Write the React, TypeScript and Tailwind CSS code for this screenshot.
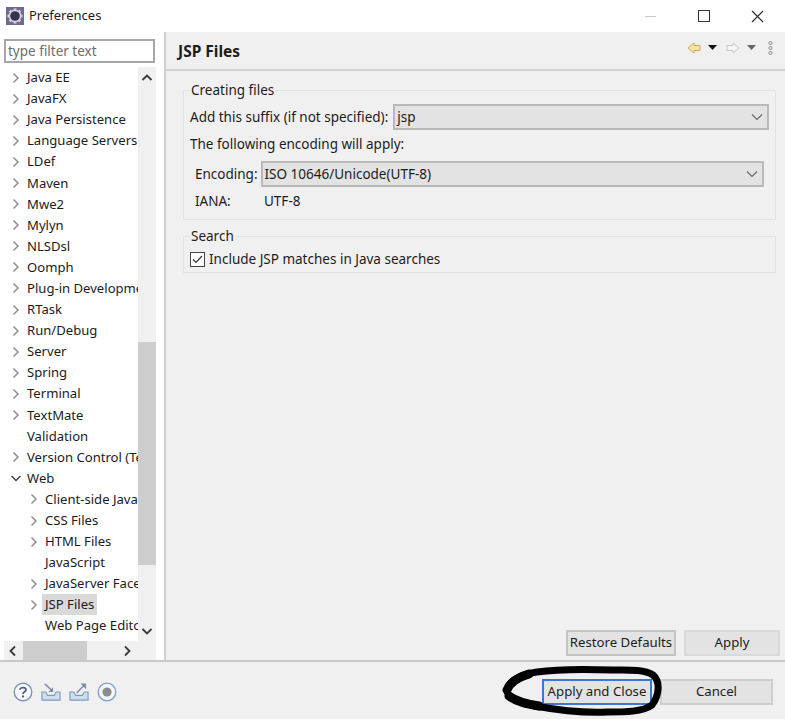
import React from "react";

const treeTop = [
  "Java EE", "JavaFX", "Java Persistence", "Language Servers", "LDef", "Maven", "Mwe2", "Mylyn", "NLSDsl", "Oomph",
  "Plug-in Development", "RTask", "Run/Debug", "Server", "Spring", "Terminal", "TextMate",
];

function Chevron({ down = false, dark = false }: { down?: boolean; dark?: boolean }) {
  return (
    <svg width="12" height="12" viewBox="0 0 12 12" fill="none" stroke={dark ? "#444" : "#8f8f8f"} strokeWidth="1.5" className="shrink-0">
      <path d={down ? "M1.5 4 L6 8.5 L10.5 4" : "M3.5 1.5 L8 6 L3.5 10.5"} />
    </svg>
  );
}

function Row({ label, level = 0, arrow = "right", selected = false }: { label: string; level?: 0 | 1; arrow?: "right" | "down" | "none"; selected?: boolean }) {
  return (
    <div className={level === 0 ? "flex h-[21.1px] items-center whitespace-nowrap pl-[6px] text-[13.1px]" : "flex h-[21.1px] items-center whitespace-nowrap pl-[24px] text-[13.1px]"}>
      <span className="mr-[5px] flex w-[12px] shrink-0 justify-center">
        {arrow === "right" && <Chevron />}
        {arrow === "down" && <Chevron down dark />}
      </span>
      <span className={selected ? "-ml-[3px] bg-[#d9d9d9] px-[3px] leading-[21px]" : "leading-[21px]"}>{label}</span>
    </div>
  );
}

function ScrollArrow({ dir }: { dir: "up" | "down" | "left" | "right" }) {
  const d = { up: "M1.5 8 L6 3.5 L10.5 8", down: "M1.5 4 L6 8.5 L10.5 4", left: "M8 1.5 L3.5 6 L8 10.5", right: "M4 1.5 L8.5 6 L4 10.5" }[dir];
  return (
    <svg width="12" height="12" viewBox="0 0 12 12" fill="none" stroke="#3a3a3a" strokeWidth="1.8" className="shrink-0">
      <path d={d} />
    </svg>
  );
}

function Combo({ value, className }: { value: string; className: string }) {
  return (
    <div className={"flex h-[26px] items-center justify-between border-2 border-[#b9b9b9] bg-[#e3e3e3] pl-[2px] pr-[4px] " + className}>
      <span>{value}</span>
      <svg width="12" height="10" viewBox="0 0 12 10" fill="none" stroke="#666" strokeWidth="1.1">
        <path d="M1 2.5 L6 7.5 L11 2.5" />
      </svg>
    </div>
  );
}

function Btn({ label, className }: { label: string; className: string }) {
  return <div className={"flex h-[26px] items-center justify-center whitespace-nowrap border-2 bg-[#e3e3e3] text-[13.2px] " + className}>{label}</div>;
}

function FooterIcons() {
  return (
    <div className="flex items-center gap-[8px] pl-[13px]">
      <svg width="20" height="20" viewBox="0 0 20 20" fill="none">
        <circle cx="10" cy="10" r="8.8" stroke="#7c93b5" strokeWidth="1.4" fill="#f7f8fb" />
        <path d="M7 7.8 C7 4.9 13 4.9 13 7.8 C13 9.8 10 9.8 10 12" stroke="#4f5f80" strokeWidth="1.8" />
        <rect x="9" y="13.4" width="2" height="2" fill="#4f5f80" />
      </svg>
      <svg width="20" height="20" viewBox="0 0 21 20" fill="none">
        <path d="M1 10 V18.5 H20 V10 H16 L14 13.5 H7 L5 10 Z" fill="#cfdcec" stroke="#7d9cc0" strokeWidth="1.2" />
        <path d="M4 1.5 L12 9" stroke="#7d8ea6" strokeWidth="1.6" />
        <path d="M12.8 5 V10 H7.8 Z" fill="#7d8ea6" />
      </svg>
      <svg width="20" height="20" viewBox="0 0 21 20" fill="none">
        <path d="M1 10 V18.5 H20 V10 H16 L14 13.5 H7 L5 10 Z" fill="#cfdcec" stroke="#7d9cc0" strokeWidth="1.2" />
        <path d="M8 11 L16 3" stroke="#7d8ea6" strokeWidth="1.6" />
        <path d="M12 1 H18 V7 Z" fill="#7d8ea6" />
      </svg>
      <svg width="20" height="20" viewBox="0 0 20 20" fill="none">
        <circle cx="10" cy="10" r="8.8" stroke="#7c9fd0" strokeWidth="1.3" fill="#f5f7fb" />
        <circle cx="10" cy="10" r="4.6" fill="#8c8c8c" />
      </svg>
    </div>
  );
}

export default function App() {
  return (
    <div
      className="relative flex h-[721px] w-[785px] flex-col overflow-hidden bg-white text-[13.5px] text-[#1c1c1c]"
      style={{ fontFamily: '"Noto Sans", "Open Sans", sans-serif' }}
    >
      {/* Title bar */}
      <div className="flex h-[32px] shrink-0 items-center justify-between bg-white">
        <div className="flex items-center gap-[5px] pl-[6px]">
          <svg width="18" height="18" viewBox="0 0 18 18">
            <rect width="18" height="18" fill="#6f6a94" />
            <g stroke="#d4d4da" strokeWidth="2.6">
              <path d="M9 1.5 V16.5 M1.5 9 H16.5 M3.7 3.7 L14.3 14.3 M14.3 3.7 L3.7 14.3" />
            </g>
            <circle cx="9" cy="9" r="6.4" fill="#d4d4da" />
            <circle cx="9" cy="9" r="4.8" fill="#35344f" />
          </svg>
          <span className="text-[13px]">Preferences</span>
        </div>
        <div className="flex items-center">
          <div className="mr-[42px] h-px w-[11px] bg-[#c8c8c8]" />
          <div className="mr-[41px] h-[12px] w-[12px] border-[1.5px] border-[#333]" />
          <svg width="13" height="13" viewBox="0 0 13 13" stroke="#333" strokeWidth="1.2" className="mr-[21px]">
            <path d="M1 1 L12 12 M12 1 L1 12" />
          </svg>
        </div>
      </div>

      {/* Main */}
      <div className="flex h-[628px] shrink-0">
        {/* Sidebar */}
        <div className="flex w-[166px] shrink-0 flex-col border-r-2 border-[#d0d0d0] bg-white pl-[4px] pr-[9px] pt-[7px]">
          <div className="flex h-[24px] shrink-0 items-center border-2 border-[#a6a6a6] pl-[2px] text-[#6d6d6d]">type filter text</div>
          <div className="mt-[4px] flex h-[574px] shrink-0">
            <div className="w-[134px] shrink-0 overflow-hidden">
              {treeTop.map((t) => (
                <Row key={t} label={t} />
              ))}
              <Row label="Validation" arrow="none" />
              <Row label="Version Control (Team)" />
              <Row label="Web" arrow="down" />
              <Row label="Client-side JavaScript" level={1} />
              <Row label="CSS Files" level={1} />
              <Row label="HTML Files" level={1} />
              <Row label="JavaScript" level={1} arrow="none" />
              <Row label="JavaServer Faces" level={1} />
              <Row label="JSP Files" level={1} selected />
              <Row label="Web Page Editor" level={1} arrow="none" />
              <Row label="Web Services" level={1} arrow="none" />
            </div>
            <div className="flex w-[18px] shrink-0 flex-col bg-[#f0f0f0]">
              <div className="flex h-[21px] items-center justify-center"><ScrollArrow dir="up" /></div>
              <div className="mt-[254px] h-[223px] bg-[#cdcdcd]" />
              <div className="mt-auto flex h-[21px] items-center justify-center"><ScrollArrow dir="down" /></div>
            </div>
          </div>
          <div className="flex h-[19px] w-[152px] shrink-0 items-center justify-between bg-[#f0f0f0] px-[3px]">
            <ScrollArrow dir="left" />
            <div className="ml-[4px] mr-auto h-[19px] w-[64px] bg-[#cdcdcd]" />
            <span className="mr-[20px]"><ScrollArrow dir="right" /></span>
          </div>
        </div>

        {/* Content */}
        <div className="flex min-w-0 flex-1 flex-col bg-[#f0f0f0]">
          <div className="flex h-[39px] shrink-0 items-center justify-between border-b-2 border-[#d2d2d2] pl-[12px] pr-[12px]">
            <span className="pt-[2px] text-[15.5px] font-bold">JSP Files</span>
            <div className="-mt-[6px] flex items-center">
              <svg width="14" height="12" viewBox="0 0 14 12" className="mr-[7px] ml-px">
                <path d="M1 6 L7 1 V3.5 H13 V8.5 H7 V11 Z" fill="#f8e4a8" stroke="#d3a84e" />
              </svg>
              <svg width="9" height="5" viewBox="0 0 9 5" className="mr-[9px]"><path d="M0 0 H9 L4.5 5 Z" fill="#111" /></svg>
              <svg width="14" height="12" viewBox="0 0 14 12" className="mr-[7px]">
                <path d="M13 6 L7 1 V3.5 H1 V8.5 H7 V11 Z" fill="#f4f4f4" stroke="#c9c9c9" />
              </svg>
              <svg width="9" height="5" viewBox="0 0 9 5" className="mr-[12px]"><path d="M0 0 H9 L4.5 5 Z" fill="#666" /></svg>
              <svg width="5" height="14" viewBox="0 0 5 14" fill="none" stroke="#8a8a8a">
                <circle cx="2.5" cy="2" r="1.6" />
                <circle cx="2.5" cy="7" r="1.6" />
                <circle cx="2.5" cy="12" r="1.6" />
              </svg>
            </div>
          </div>

          <div className="flex flex-1 flex-col pl-[17px] pr-[9px] pt-[10px]">
            <fieldset className="h-[139px] shrink-0 border border-[#e2e2e2] px-[6px]">
              <legend className="px-px leading-[19px]">Creating files</legend>
              <div className="mt-[4px] flex items-center gap-[5px]">
                <span>Add this suffix (if not specified):</span>
                <Combo value="jsp" className="flex-1" />
              </div>
              <div className="mt-[4px] leading-[20px]">The following encoding will apply:</div>
              <div className="mt-[7px] flex items-center gap-[3px] px-[5px]">
                <span>Encoding:</span>
                <Combo value="ISO 10646/Unicode(UTF-8)" className="flex-1" />
              </div>
              <div className="mt-[4px] flex pl-[5px] leading-[20px]">
                <span className="w-[69px]">IANA:</span>
                <span>UTF-8</span>
              </div>
            </fieldset>

            <fieldset className="mt-[7px] h-[46px] shrink-0 border border-[#e2e2e2] pl-[6px]">
              <legend className="px-px leading-[19px]">Search</legend>
              <div className="mt-[3px] flex items-center gap-[4px]">
                <div className="flex h-[15px] w-[15px] items-center justify-center border border-[#444] bg-white">
                  <svg width="11" height="9" viewBox="0 0 11 9" fill="none" stroke="#333" strokeWidth="1.2">
                    <path d="M1 4.5 L4 7.5 L10 1" />
                  </svg>
                </div>
                <span>Include JSP matches in Java searches</span>
              </div>
            </fieldset>

            <div className="mt-auto mb-[4px] flex justify-end gap-[8px]">
              <Btn label="Restore Defaults" className="w-[110px] border-[#c4c4c4]" />
              <Btn label="Apply" className="-mr-[4px] w-[96px] border-[#dadada]" />
            </div>
          </div>
        </div>
      </div>

      {/* Footer */}
      <div className="flex h-[59px] shrink-0 items-center justify-between border-t-2 border-[#c8c8c8] bg-[#f0f0f0] pt-[3px]">
        <FooterIcons />
        <div className="flex items-center gap-[8px] pr-[12px]">
          <Btn label="Apply and Close" className="w-[110px] border-[#3c78d0]" />
          <Btn label="Cancel" className="w-[113px] border-[#cfcfcf]" />
        </div>
      </div>
      <div className="flex-1 bg-white" />

      {/* Hand-drawn annotation over the screenshot */}
      <svg className="pointer-events-none absolute left-[495px] top-[660px]" width="180" height="61" viewBox="0 0 180 61" fill="none">
        <path
          d="M13 27 C18 18 28 14 42 12 C62 9 90 9 117 10 C132 10 149 9 158 15 C165 21 165 34 157 45 C148 52 130 52 112 52 C90 53 62 50 40 46 C24 43 12 38 12 30 Z"
          stroke="#000"
          strokeWidth="7"
          strokeLinejoin="round"
        />
        <path d="M12 30 C15 22 24 17 34 14 M14 36 C22 42 32 44 44 46" stroke="#000" strokeWidth="9" strokeLinecap="round" />
      </svg>
    </div>
  );
}
